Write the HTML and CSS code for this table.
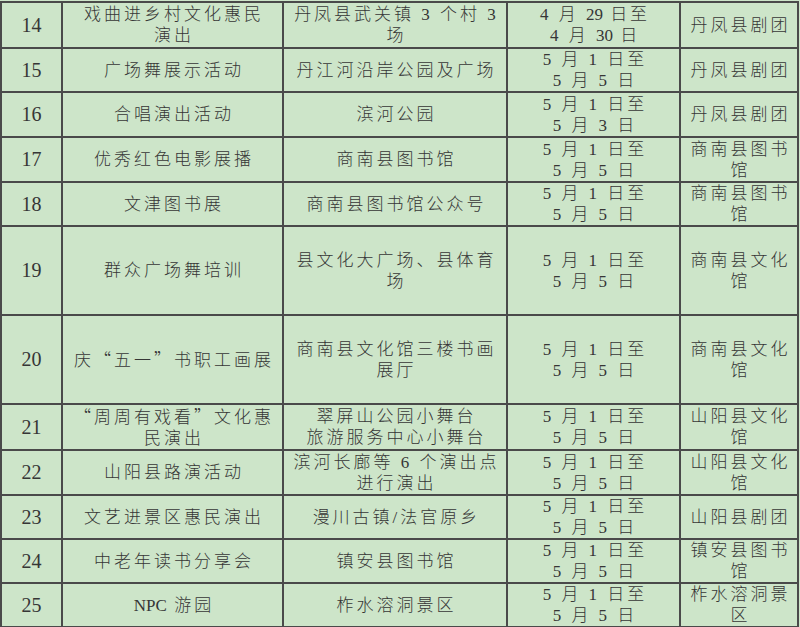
FILE: index.html
```html
<!DOCTYPE html>
<html lang="zh-CN">
<head>
<meta charset="utf-8">
<link rel="stylesheet" href="styles.css">
</head>
<body>
<table class="sched">
  <colgroup>
    <col class="c-no"><col class="c-name"><col class="c-place"><col class="c-date"><col class="c-org">
  </colgroup>
  <tr class="h46">
    <td class="no">14</td>
    <td>戏曲进乡村文化惠民<br>演出</td>
    <td>丹凤县武关镇 3 个村 3<br>场</td>
    <td>4 月 <span class="n">29</span> 日至<br>4 月 <span class="n">30</span> 日</td>
    <td>丹凤县剧团</td>
  </tr>
  <tr class="h43">
    <td class="no">15</td>
    <td>广场舞展示活动</td>
    <td>丹江河沿岸公园及广场</td>
    <td>5 月 1 日至<br>5 月 5 日</td>
    <td>丹凤县剧团</td>
  </tr>
  <tr class="h45">
    <td class="no">16</td>
    <td>合唱演出活动</td>
    <td>滨河公园</td>
    <td>5 月 1 日至<br>5 月 3 日</td>
    <td>丹凤县剧团</td>
  </tr>
  <tr class="h45">
    <td class="no">17</td>
    <td>优秀红色电影展播</td>
    <td>商南县图书馆</td>
    <td>5 月 1 日至<br>5 月 5 日</td>
    <td>商南县图书<br>馆</td>
  </tr>
  <tr class="h44">
    <td class="no">18</td>
    <td>文津图书展</td>
    <td>商南县图书馆公众号</td>
    <td>5 月 1 日至<br>5 月 5 日</td>
    <td>商南县图书<br>馆</td>
  </tr>
  <tr class="h89">
    <td class="no">19</td>
    <td>群众广场舞培训</td>
    <td>县文化大广场、县体育<br>场</td>
    <td>5 月 1 日至<br>5 月 5 日</td>
    <td>商南县文化<br>馆</td>
  </tr>
  <tr class="h89">
    <td class="no">20</td>
    <td>庆<span class="q">“</span>五一<span class="q">”</span>书职工画展</td>
    <td>商南县文化馆三楼书画<br>展厅</td>
    <td>5 月 1 日至<br>5 月 5 日</td>
    <td>商南县文化<br>馆</td>
  </tr>
  <tr class="h44">
    <td class="no">21</td>
    <td><span class="q">“</span>周周有戏看<span class="q">”</span>文化惠<br>民演出</td>
    <td>翠屏山公园小舞台<br>旅游服务中心小舞台</td>
    <td>5 月 1 日至<br>5 月 5 日</td>
    <td>山阳县文化<br>馆</td>
  </tr>
  <tr class="h45">
    <td class="no">22</td>
    <td>山阳县路演活动</td>
    <td>滨河长廊等 6 个演出点<br>进行演出</td>
    <td>5 月 1 日至<br>5 月 5 日</td>
    <td>山阳县文化<br>馆</td>
  </tr>
  <tr class="h44">
    <td class="no">23</td>
    <td>文艺进景区惠民演出</td>
    <td>漫川古镇/法官原乡</td>
    <td>5 月 1 日至<br>5 月 5 日</td>
    <td>山阳县剧团</td>
  </tr>
  <tr class="h44">
    <td class="no">24</td>
    <td>中老年读书分享会</td>
    <td>镇安县图书馆</td>
    <td>5 月 1 日至<br>5 月 5 日</td>
    <td>镇安县图书<br>馆</td>
  </tr>
  <tr class="h44">
    <td class="no">25</td>
    <td><span class="n">NPC</span> 游园</td>
    <td>柞水溶洞景区</td>
    <td>5 月 1 日至<br>5 月 5 日</td>
    <td>柞水溶洞景<br>区</td>
  </tr>
</table>
</body>
</html>
```

FILE: styles.css
```css
html, body {
  margin: 0;
  padding: 0;
  background: #cde5c9;
}
body {
  width: 800px;
  height: 627px;
  overflow: hidden;
  padding-top: 1px;
}
.sched {
  border-collapse: collapse;
  table-layout: fixed;
  width: 797px;
  color: #363636;
  font-family: "Liberation Serif", "Noto Sans CJK SC", serif;
  font-size: 17px;
  font-weight: 300;
  letter-spacing: 3px;
  line-height: 21px;
}
.c-no { width: 61px; }
.c-name { width: 221px; }
.c-place { width: 224px; }
.c-date { width: 173px; }
.c-org { width: 118px; }
.sched td {
  border: 2px solid #4a4a4a;
  padding: 0 0 0 3px;
  text-align: center;
  vertical-align: middle;
  white-space: nowrap;
  overflow: hidden;
}
.sched td.no {
  font-size: 20px;
  letter-spacing: 0;
  padding: 0;
}
.n { letter-spacing: 0; }
.q { font-family: "Noto Sans CJK SC", sans-serif; }
.h43 { height: 43px; }
.h44 { height: 44px; }
.h45 { height: 45px; }
.h46 { height: 46px; }
.h89 { height: 89px; }
```
